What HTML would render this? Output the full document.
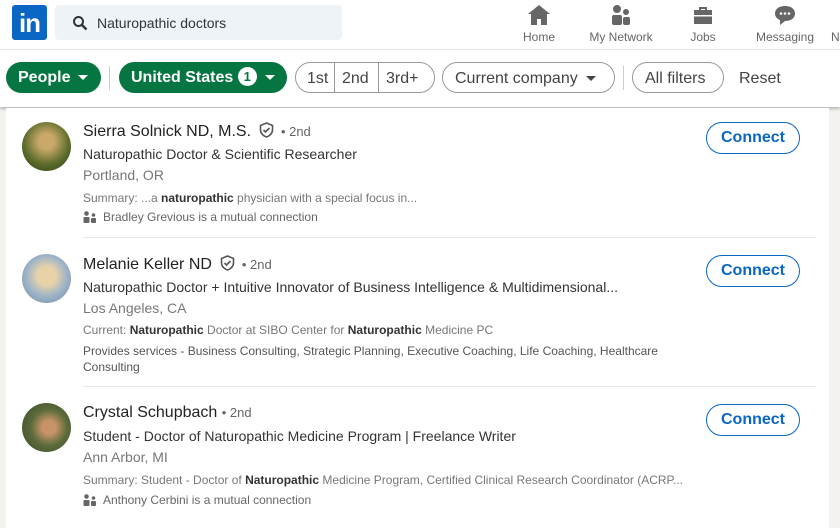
<!DOCTYPE html><html><head><style>
body{margin:0;width:840px;height:519px;overflow:hidden;background:#f3f2ef;font-family:"Liberation Sans",sans-serif;position:relative}
.hdr{position:absolute;left:0;top:0;width:840px;height:49px;background:#fff;border-bottom:1px solid #e6e6e6}
.logo{position:absolute;left:12px;top:5px;width:35px;height:35px;background:#0a66c2;border-radius:3px;color:#fff;font-weight:bold;font-size:26px;line-height:37px;text-align:center;letter-spacing:-1px}
.search{position:absolute;left:55px;top:5px;width:287px;height:35px;background:#eef3f8;border-radius:4px}
.search span{position:absolute;left:42px;top:10px;font-size:14px;color:#333}
.nav{position:absolute;top:0;text-align:center;font-size:12px;color:#666}
.nav svg{display:block;margin:4px auto 4px}
.fbar{position:absolute;left:0;top:50px;width:840px;height:57px;background:#fff;box-shadow:0 2px 3px rgba(0,0,0,.25)}
.pill{position:absolute;top:12px;height:31px;border-radius:16px;box-sizing:border-box;font-size:16px;line-height:31px;padding:0 12px;color:#444;border:1px solid #999}
.g{background:#057642;color:#fff;border:none;font-weight:bold}
.tri{display:inline-block;width:0;height:0;border-left:5px solid transparent;border-right:5px solid transparent;border-top:5px solid currentColor;vertical-align:middle;margin-left:8px}
.sep{position:absolute;top:16px;width:1px;height:24px;background:#ccc}
.card{position:absolute;left:6px;top:108px;width:823px;height:420px;background:#fff}
.item{position:absolute;left:0;width:823px}
.av{position:absolute;left:16px;width:49px;height:49px;border-radius:50%}
.nm{position:absolute;left:77px;font-size:16px;color:#222}
.nm small{font-size:13px;color:#666}
.nm svg{vertical-align:-2px;margin:0 2px 0 4px}
.t{position:absolute;left:77px;font-size:14px;color:#333;white-space:nowrap}
.loc{position:absolute;left:77px;font-size:14px;color:#777}
.s{position:absolute;left:77px;font-size:12px;color:#777;white-space:nowrap}
.s b{color:#333}
.m{position:absolute;left:77px;font-size:12px;color:#666}
.m svg{vertical-align:-2px;margin-right:6px}
.btn{position:absolute;left:700px;width:94px;height:32px;box-sizing:border-box;border:1px solid #0a66c2;border-radius:16px;color:#0a66c2;font-size:16px;font-weight:bold;text-align:center;line-height:30px}
.hr{position:absolute;left:77px;width:733px;height:1px;background:#e6e6e6}
</style></head><body>
<div class="hdr">
<div class="logo">in</div>
<div class="search"><svg style="position:absolute;left:17px;top:10px" width="16" height="16" viewBox="0 0 16 16"><circle cx="6.5" cy="6.5" r="4.5" fill="none" stroke="#333" stroke-width="2"/><path d="M10 10l4.5 4.5" stroke="#333" stroke-width="2.4"/></svg><span>Naturopathic doctors</span></div>
<div class="nav" style="left:518px;width:42px"><svg width="24" height="22" viewBox="0 0 24 22"><path d="M12 1L1 10h3v11h6v-6h4v6h6V10h3z" fill="#666"/></svg>Home</div>
<div class="nav" style="left:586px;width:70px"><svg width="24" height="22" viewBox="0 0 24 22"><circle cx="8" cy="5" r="4" fill="#666"/><rect x="3" y="11" width="10" height="10" rx="2" fill="#666"/><circle cx="17" cy="8" r="3" fill="#666"/><rect x="14" y="13" width="7" height="8" rx="2" fill="#666"/></svg>My Network</div>
<div class="nav" style="left:686px;width:34px"><svg width="24" height="22" viewBox="0 0 24 22"><path d="M8 3h8v3h5v14H3V6h5zM10 5v1h4V5z" fill="#666"/><rect x="3" y="11" width="18" height="1.5" fill="#fff"/></svg>Jobs</div>
<div class="nav" style="left:753px;width:64px"><svg width="24" height="22" viewBox="0 0 24 22"><path d="M12 2c6 0 10 3 10 7.5S18 17 12 17l-5 4v-5C4 15 2 12.5 2 9.5 2 5 6 2 12 2z" fill="#666"/><circle cx="8" cy="9.5" r="1.3" fill="#fff"/><circle cx="12" cy="9.5" r="1.3" fill="#fff"/><circle cx="16" cy="9.5" r="1.3" fill="#fff"/></svg>Messaging</div>
<div class="nav" style="left:831px;width:20px;text-align:left;top:30px">N</div>
</div>
<div class="fbar">
<div class="pill g" style="left:6px;width:95px">People<span class="tri"></span></div>
<div class="sep" style="left:109px"></div>
<div class="pill g" style="left:119px;width:168px">United States <span style="display:inline-block;width:19px;height:19px;border-radius:50%;background:#fff;color:#057642;font-size:13px;line-height:19px;text-align:center;vertical-align:1px">1</span><span class="tri"></span></div>
<div class="pill" style="left:295px;width:140px;padding:0"><span style="position:absolute;left:11px">1st</span><span style="position:absolute;left:38px;top:0;bottom:0;width:1px;background:#999"></span><span style="position:absolute;left:46px">2nd</span><span style="position:absolute;left:82px;top:0;bottom:0;width:1px;background:#999"></span><span style="position:absolute;left:90px">3rd+</span></div>
<div class="pill" style="left:442px;width:173px">Current company<span class="tri"></span></div>
<div class="sep" style="left:623px"></div>
<div class="pill" style="left:632px;width:92px">All filters</div>
<div style="position:absolute;left:739px;top:20px;font-size:16px;color:#444">Reset</div>
</div>
<div class="card">
<div class="item" style="top:0">
<div class="av" style="top:14px;background:radial-gradient(circle at 50% 40%,#c9a86a 20%,#5a6b2a 60%,#2f3d18)"></div>
<div class="nm" style="top:14px">Sierra Solnick ND, M.S. <svg width="15" height="16" viewBox="0 0 15 16"><path d="M7.5 1L13.5 3.5V8c0 3.5-3 6-6 7-3-1-6-3.5-6-7V3.5z" fill="none" stroke="#555" stroke-width="1.6"/><path d="M4.5 8l2 2 4-4" fill="none" stroke="#555" stroke-width="1.6"/></svg> <small>• 2nd</small></div>
<div class="t" style="top:38px">Naturopathic Doctor &amp; Scientific Researcher</div>
<div class="loc" style="top:59px">Portland, OR</div>
<div class="s" style="top:83px">Summary: ...a <b>naturopathic</b> physician with a special focus in...</div>
<div class="m" style="top:102px"><svg width="14" height="12" viewBox="0 0 14 12"><circle cx="3.5" cy="2.5" r="2.3" fill="#666"/><rect x="0.5" y="6" width="6" height="6" rx="1" fill="#666"/><circle cx="10.5" cy="4" r="1.8" fill="#666"/><rect x="8" y="7" width="5" height="5" rx="1" fill="#666"/></svg>Bradley Grevious is a mutual connection</div>
<div class="btn" style="top:14px">Connect</div>
<div class="hr" style="top:129px"></div>
</div>
<div class="item" style="top:130px">
<div class="av" style="top:16px;background:radial-gradient(circle at 50% 45%,#e8d3a8 25%,#9fb4c8 55%,#6d8aa5)"></div>
<div class="nm" style="top:17px">Melanie Keller ND <svg width="15" height="16" viewBox="0 0 15 16"><path d="M7.5 1L13.5 3.5V8c0 3.5-3 6-6 7-3-1-6-3.5-6-7V3.5z" fill="none" stroke="#555" stroke-width="1.6"/><path d="M4.5 8l2 2 4-4" fill="none" stroke="#555" stroke-width="1.6"/></svg> <small>• 2nd</small></div>
<div class="t" style="top:41px">Naturopathic Doctor + Intuitive Innovator of Business Intelligence &amp; Multidimensional...</div>
<div class="loc" style="top:62px">Los Angeles, CA</div>
<div class="s" style="top:85px">Current: <b>Naturopathic</b> Doctor at SIBO Center for <b>Naturopathic</b> Medicine PC</div>
<div class="s" style="top:106px;color:#555">Provides services - Business Consulting, Strategic Planning, Executive Coaching, Life Coaching, Healthcare</div>
<div class="s" style="top:122px;color:#555">Consulting</div>
<div class="btn" style="top:17px">Connect</div>
<div class="hr" style="top:148px"></div>
</div>
<div class="item" style="top:279px">
<div class="av" style="top:16px;background:radial-gradient(circle at 55% 50%,#c9936a 18%,#5b6b3a 50%,#3a4a2a)"></div>
<div class="nm" style="top:17px">Crystal Schupbach <small>• 2nd</small></div>
<div class="t" style="top:41px">Student - Doctor of Naturopathic Medicine Program | Freelance Writer</div>
<div class="loc" style="top:62px">Ann Arbor, MI</div>
<div class="s" style="top:86px">Summary: Student - Doctor of <b>Naturopathic</b> Medicine Program, Certified Clinical Research Coordinator (ACRP...</div>
<div class="m" style="top:106px"><svg width="14" height="12" viewBox="0 0 14 12"><circle cx="3.5" cy="2.5" r="2.3" fill="#666"/><rect x="0.5" y="6" width="6" height="6" rx="1" fill="#666"/><circle cx="10.5" cy="4" r="1.8" fill="#666"/><rect x="8" y="7" width="5" height="5" rx="1" fill="#666"/></svg>Anthony Cerbini is a mutual connection</div>
<div class="btn" style="top:17px">Connect</div>
</div>
</div>
</body></html>
